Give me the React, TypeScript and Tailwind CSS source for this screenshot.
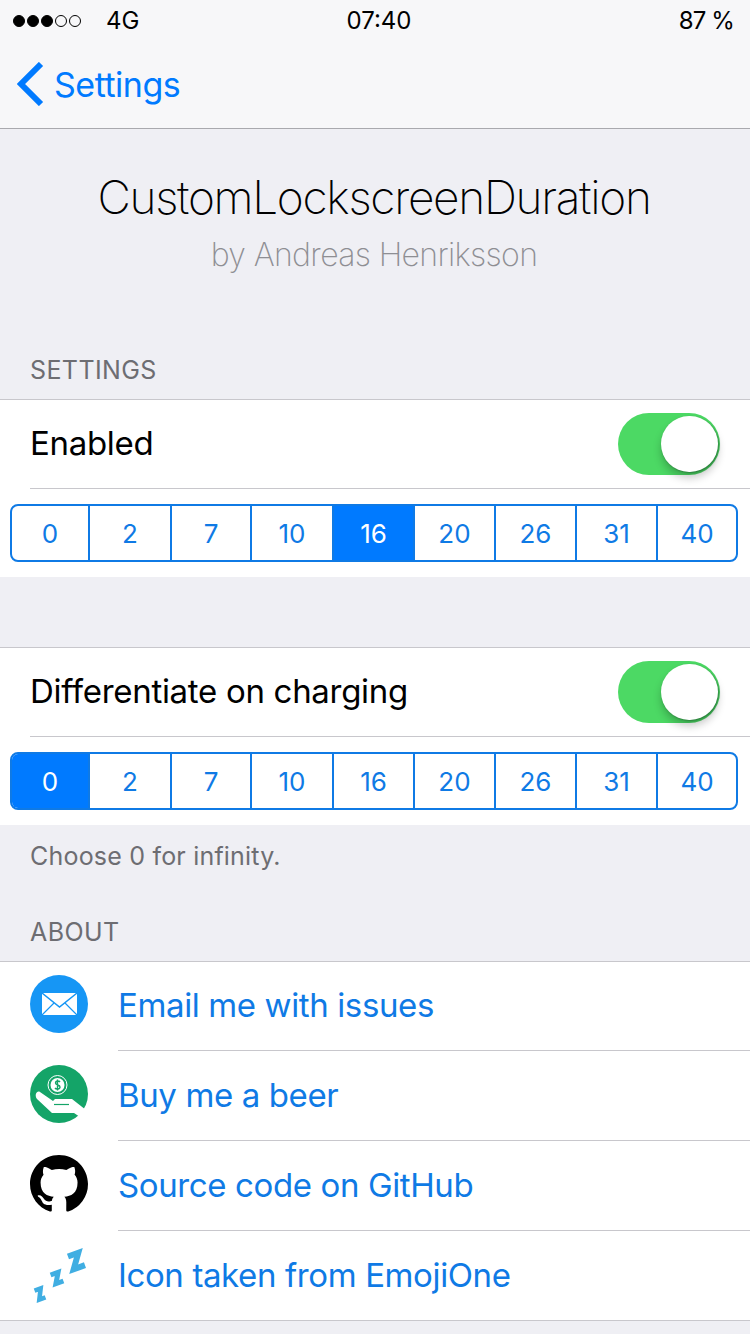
import React from 'react';

const values = [0, 2, 7, 10, 16, 20, 26, 31, 40];
const widths = ['w-[78px]', 'w-[82px]', 'w-[80px]', 'w-[82px]', 'w-[81px]', 'w-[81px]', 'w-[81px]', 'w-[81px]', 'flex-1'];

function Toggle() {
  return (
    <div className="relative w-[102px] h-[62px] rounded-full bg-[#4cd964]">
      <div className="absolute right-[2px] top-[3px] w-[57px] h-[56px] rounded-full bg-white shadow-[1px_1px_2px_rgba(30,90,45,0.6),0_6px_9px_rgba(0,0,0,0.22)]" />
    </div>
  );
}

function Segmented({ selected }: { selected: number }) {
  return (
    <div className="flex h-[58px] ml-[10px] mr-[12px] border-2 border-[#0f7ae5] rounded-[8px] overflow-hidden">
      {values.map((v, i) => (
        <div
          key={v}
          className={`${widths[i]} flex items-center justify-center text-[26px] ${i < 8 ? 'border-r-2 border-[#0f7ae5]' : ''} ${
            v === selected ? 'bg-[#007aff] text-white' : 'text-[#0f7ae5]'
          }`}
        >
          {v}
        </div>
      ))}
    </div>
  );
}

function SwitchCell({ label, selected }: { label: string; selected: number }) {
  return (
    <div className="bg-white border-t border-[#c8c7cc] h-[178px]">
      <div className="ml-[30px] h-[89px] pr-[30px] border-b border-[#c8c7cc] flex items-center justify-between">
        <span className="text-[33px] tracking-[-0.3px] text-black">{label}</span>
        <Toggle />
      </div>
      <div className="pt-[15px]">
        <Segmented selected={selected} />
      </div>
    </div>
  );
}

function MailIcon() {
  return (
    <svg width="58" height="58" viewBox="0 0 58 58">
      <circle cx="29" cy="29" r="29" fill="#1696f5" />
      <rect x="12" y="18" width="35" height="22" fill="#fff" />
      <path d="M12 18 L29.5 32 L47 18" fill="none" stroke="#1696f5" strokeWidth="1.6" />
      <path d="M12 40 L24 28 M47 40 L35 28" fill="none" stroke="#1696f5" strokeWidth="1.2" />
    </svg>
  );
}

function MoneyIcon() {
  return (
    <svg width="58" height="58" viewBox="0 0 58 58">
      <circle cx="29" cy="29" r="29" fill="#14a468" />
      <circle cx="27.5" cy="20" r="9.5" fill="none" stroke="#fff" strokeWidth="1" />
      <circle cx="27.5" cy="20" r="7" fill="#fff" />
      <path d="M30 17 C29 15.5 25.5 15.5 25.5 18 C25.5 20.5 30 19.5 30 22 C30 24.5 26 24.5 25 23 M27.5 14.5 V25.5" fill="none" stroke="#14a468" strokeWidth="1.4" />
      <path
        d="M10 27 L23 36 L25 34 L42 34 L56 45 L50 52 L44 48 L22 48 L7 34 C4 30 7 25 10 27 Z"
        fill="#fff"
      />
      <path d="M24 39.5 L39 39.5" stroke="#14a468" strokeWidth="1.2" />
    </svg>
  );
}

function GithubIcon() {
  return (
    <svg width="58" height="58" viewBox="0 0 16 16" fill="#000">
      <path d="M8 0C3.58 0 0 3.58 0 8c0 3.54 2.29 6.53 5.47 7.59.4.07.55-.17.55-.38 0-.19-.01-.82-.01-1.49-2.01.37-2.53-.49-2.69-.94-.09-.23-.48-.94-.82-1.13-.28-.15-.68-.52-.01-.53.63-.01 1.08.58 1.23.82.72 1.21 1.87.87 2.33.66.07-.52.28-.87.51-1.07-1.78-.2-3.64-.89-3.64-3.95 0-.87.31-1.59.82-2.15-.08-.2-.36-1.02.08-2.12 0 0 .67-.21 2.2.82.64-.18 1.32-.27 2-.27.68 0 1.36.09 2 .27 1.53-1.04 2.2-.82 2.2-.82.44 1.1.16 1.92.08 2.12.51.56.82 1.27.82 2.15 0 3.07-1.87 3.75-3.65 3.95.29.25.54.73.54 1.48 0 1.07-.01 1.93-.01 2.2 0 .21.15.46.55.38A8.013 8.013 0 0016 8c0-4.42-3.58-8-8-8z" />
    </svg>
  );
}

function ZzzIcon() {
  return (
    <svg width="58" height="58" viewBox="0 0 58 58" fill="none" stroke="#40aee2" strokeLinejoin="miter">
      <path d="M-6 -7 H5 L-5 7 H7" strokeWidth="6" transform="translate(46 14) rotate(-20)" />
      <path d="M-5 -5 H3 L-3 5 H5" strokeWidth="5" transform="translate(27 31) rotate(-20)" />
      <path d="M-4 -5 H2.5 L-2.5 5 H4" strokeWidth="4.6" transform="translate(10 47) rotate(-20)" />
    </svg>
  );
}

function LinkRow({ icon, label, height, last, iconPad }: { icon: React.ReactNode; label: string; height: string; last?: boolean; iconPad?: string }) {
  return (
    <div className={`flex ${height}`}>
      <div className={`w-[118px] shrink-0 pl-[30px] ${iconPad ?? 'pb-[4px]'} flex items-center`}>{icon}</div>
      <div className={`flex-1 flex items-center text-[33px] tracking-[-0.38px] text-[#0f7ae5] ${last ? '' : 'border-b border-[#c8c7cc]'}`}>{label}</div>
    </div>
  );
}

export default function App() {
  return (
    <div className="w-[750px] h-[1334px] overflow-hidden bg-[#efeff4]" style={{ fontFamily: 'Inter, sans-serif' }}>
      {/* Nav */}
      <div className="h-[129px] bg-[#f7f7f9] border-b border-[#a9a9ae]">
        <div className="h-[42px] relative flex items-center px-[13px] text-[24px] text-black">
          <div className="flex items-center gap-[2px]">
            {[1, 1, 1, 0, 0].map((on, i) => (
              <span key={i} className={`w-[12px] h-[12px] rounded-full border border-black ${on ? 'bg-black' : ''}`} />
            ))}
          </div>
          <span className="ml-[25px]">4G</span>
          <span className="absolute left-[8px] right-0 text-center">07:40</span>
          <span className="absolute right-[16px] tracking-[-0.9px]">87 %</span>
        </div>
        <div className="flex items-center pl-[17px] h-[84px] text-[34px] tracking-[-0.5px] text-[#007aff]">
          <svg width="28" height="44" viewBox="0 0 28 44" fill="none" stroke="#007aff" strokeWidth="6">
            <path d="M24 2 L4 22 L24 42" />
          </svg>
          <span className="ml-[9px]">Settings</span>
        </div>
      </div>

      {/* Title */}
      <div className="h-[208px] pt-[38px] pr-[2px] text-center">
        <div className="text-[46px] leading-[60px] font-extralight text-black tracking-[-1.3px]">CustomLockscreenDuration</div>
        <div className="mt-[4px] text-[32px] leading-[48px] font-extralight text-[#8e8e93] tracking-[-0.65px]">by Andreas Henriksson</div>
      </div>

      <div className="h-[62px] pl-[30px] pt-[17px] text-[25px] leading-[32px] tracking-[0.4px] text-[#6d6d72]">SETTINGS</div>
      <SwitchCell label="Enabled" selected={16} />

      <div className="h-[70px]" />
      <SwitchCell label="Differentiate on charging" selected={0} />

      <div className="h-[136px] pl-[30px] pt-[15px] text-[25px] leading-[32px] tracking-[0.2px] text-[#6d6d72]">
        <div>Choose 0 for infinity.</div>
        <div className="mt-[44px] tracking-[0.4px]">ABOUT</div>
      </div>

      {/* About */}
      <div className="bg-white border-y border-[#c8c7cc]">
        <LinkRow icon={<MailIcon />} label="Email me with issues" height="h-[89px]" iconPad="pb-[6px]" />
        <LinkRow icon={<MoneyIcon />} label="Buy me a beer" height="h-[90px]" />
        <LinkRow icon={<GithubIcon />} label="Source code on GitHub" height="h-[90px]" />
        <LinkRow icon={<ZzzIcon />} label="Icon taken from EmojiOne" height="h-[89px]" iconPad="pb-[0px]" last />
      </div>
    </div>
  );
}
